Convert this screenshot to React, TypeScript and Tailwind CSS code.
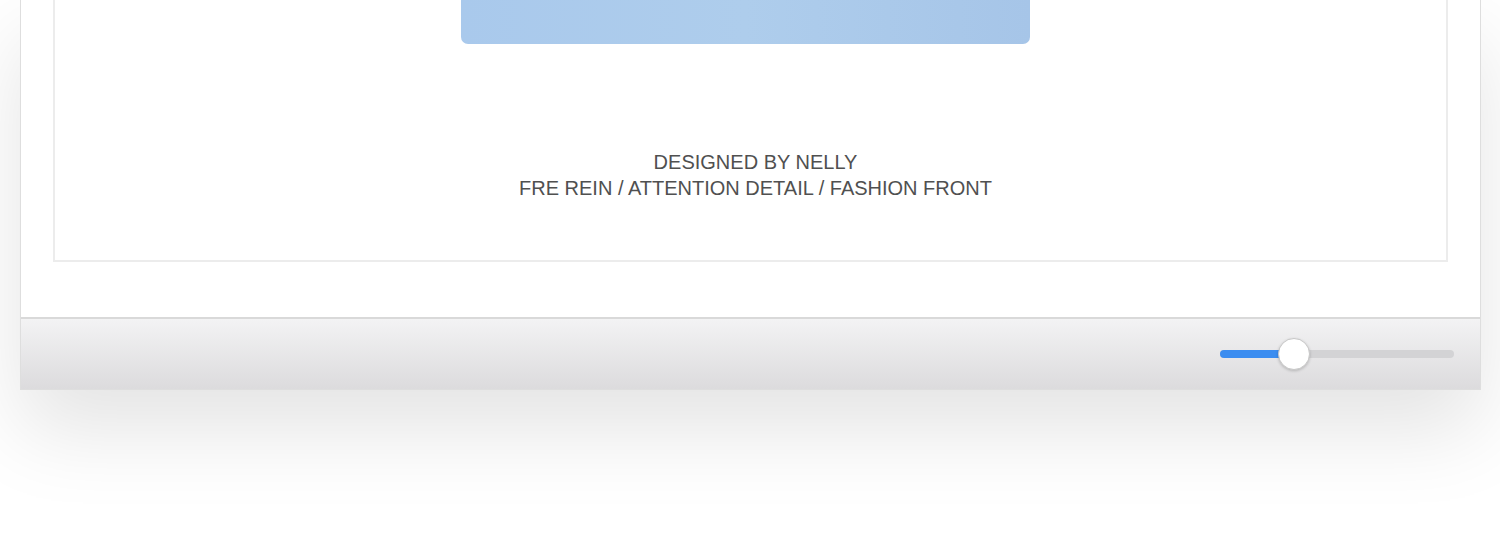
import React from "react";

export default function App() {
  return (
    <div className="h-[549px] w-[1500px] overflow-hidden bg-white pl-[20px] pr-[19px]" style={{ fontFamily: '"Liberation Sans", Arial, sans-serif' }}>
      <div className="flex flex-col border-x border-b border-[#dedede] bg-white shadow-[0_40px_80px_0_rgba(0,0,0,0.11)]">
        <div className="px-[32px]">
          <div className="flex flex-col border-x-2 border-b-2 border-[#ececec]">
            <div className="flex pl-[406px]">
              <div className="h-[44px] w-[569px] rounded-b-[7px] bg-gradient-to-r from-[#a9c9ec] via-[#aecdec] to-[#a6c5e8]" />
            </div>
            <div className="flex flex-col items-center pb-[59px] pl-[10px] pt-[105px] text-[20px] leading-[26px] text-[#505050]">
              <div>DESIGNED BY NELLY</div>
              <div>FRE REIN / ATTENTION DETAIL / FASHION FRONT</div>
            </div>
          </div>
        </div>
        <div className="h-[55px]" />
        <div className="flex h-[72px] items-center justify-end border-t-2 border-[#d9d9d9] bg-gradient-to-b from-[#f3f3f4] to-[#dcdbdd] pr-[26px]">
          <div className="relative h-[8px] w-[234px] rounded-full bg-[#d3d3d5]">
            <div className="absolute left-0 top-0 h-[8px] w-[74px] rounded-full bg-[#3b8df0]" />
            <div className="absolute left-[58px] top-[-12px] h-[32px] w-[32px] rounded-full border border-[#c8c8c8] bg-white shadow-[0_1px_3px_rgba(0,0,0,0.2)]" />
          </div>
        </div>
      </div>
    </div>
  );
}
